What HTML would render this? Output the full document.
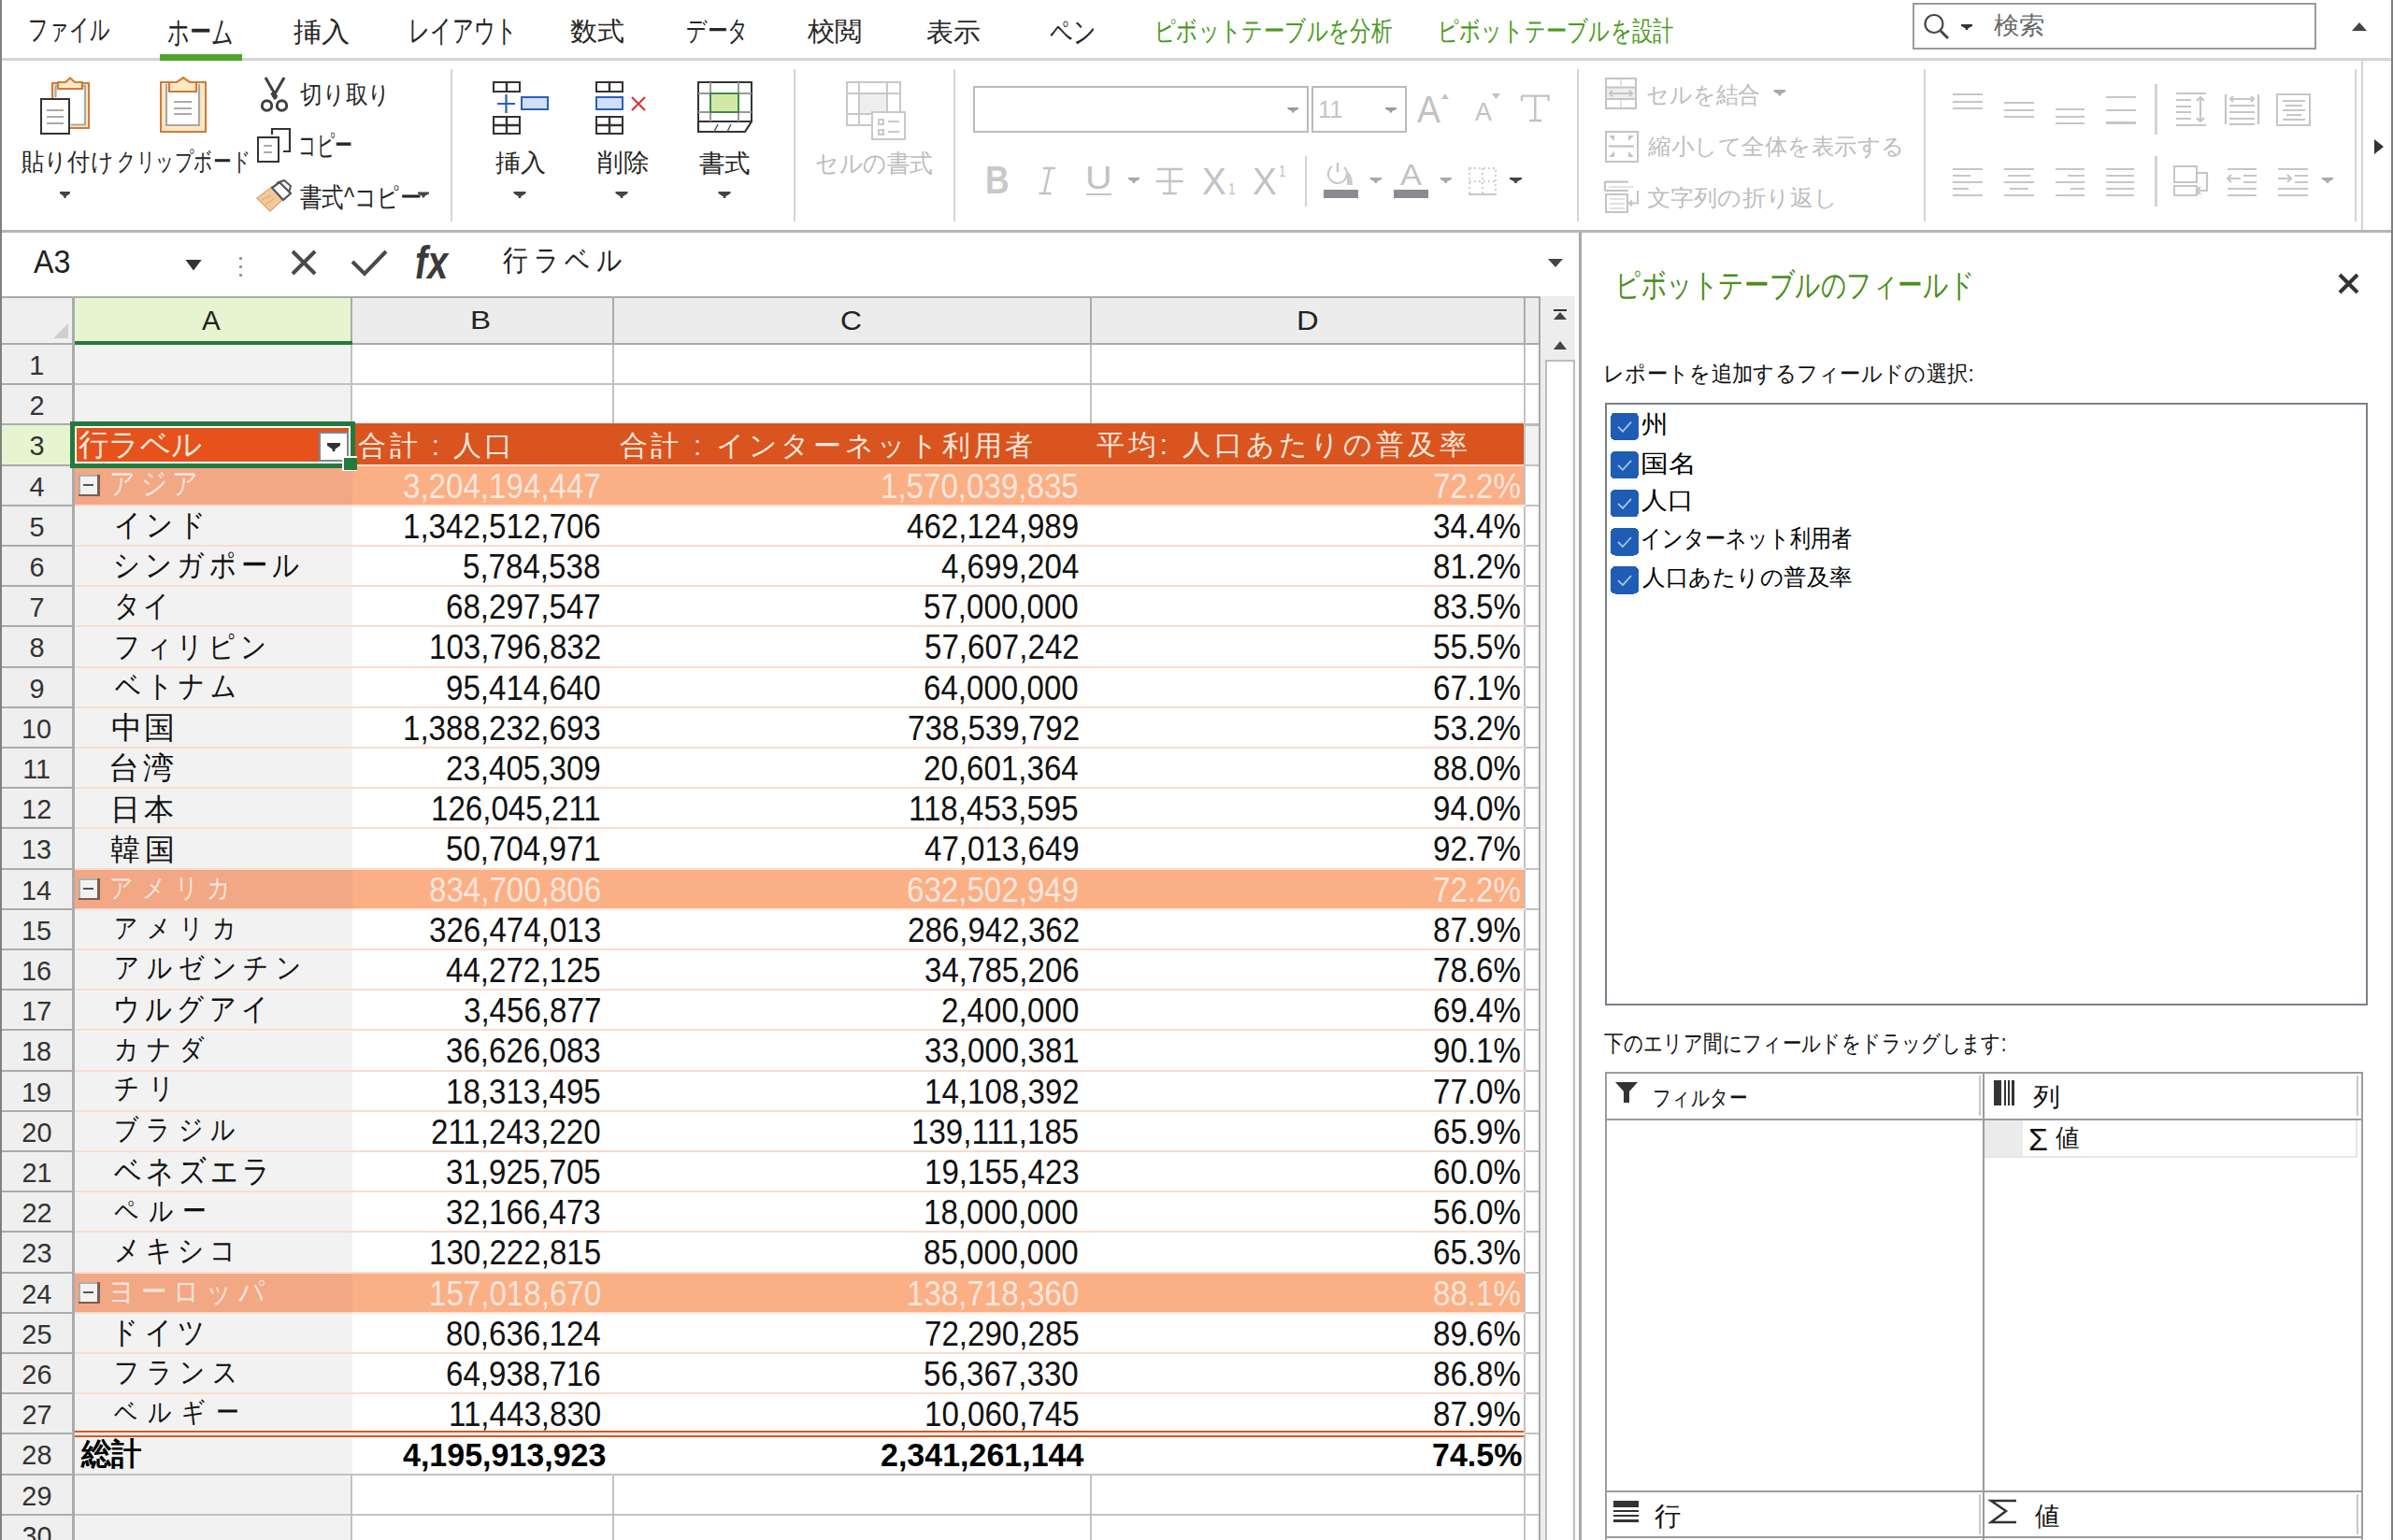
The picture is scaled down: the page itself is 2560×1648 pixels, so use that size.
<!DOCTYPE html>
<html><head><meta charset="utf-8"><style>
html,body{margin:0;padding:0;width:2560px;height:1648px;overflow:hidden;background:#fff}
svg{position:absolute;left:0;top:0} rect{shape-rendering:crispEdges}
span{position:absolute;line-height:1;white-space:pre;transform-origin:0 0;font-family:'Liberation Sans', sans-serif}
</style></head><body>
<svg width="2560" height="1648" viewBox="0 0 2560 1648">
<rect x="0" y="0" width="2560" height="1648" fill="#ffffff" /><rect x="2" y="62" width="2556" height="3" fill="#d5d5d5" /><rect x="171" y="58" width="88" height="7" fill="#4ca62a" /><rect x="2047" y="4" width="430" height="48" fill="#fff" stroke="#9a9a9a" stroke-width="2"/><circle cx="2069" cy="25.5" r="9.5" fill="none" stroke="#444" stroke-width="2.2"/><path d="M2076 33 L2084 41" stroke="#444" fill="none" stroke-width="3" /><path d="M2098.00 26.00 L2110.00 26.00 L2110.00 27.80 L2105.20 30.50 L2105.20 32.00 L2102.80 32.00 L2102.80 30.50 L2098.00 27.80 Z" fill="#333"/><path d="M2516 33 L2532 33 L2524 24 Z" stroke="none" fill="#444" stroke-width="2" /><rect x="2" y="246" width="2556" height="3" fill="#b5b5b5" /><rect x="482" y="74" width="2" height="163" fill="#d4d4d4" /><rect x="849" y="74" width="2" height="163" fill="#d4d4d4" /><rect x="1020" y="74" width="2" height="163" fill="#d4d4d4" /><rect x="1687" y="74" width="2" height="163" fill="#d4d4d4" /><rect x="2058" y="74" width="2" height="163" fill="#d4d4d4" /><rect x="2519" y="74" width="2" height="163" fill="#d4d4d4" /><rect x="2526" y="65" width="2" height="181" fill="#d4d4d4" /><path d="M2540 149 L2550 157 L2540 165 Z" stroke="none" fill="#333" stroke-width="2" /><rect x="0" y="0" width="2" height="1648" fill="#808080" /><rect x="2558" y="0" width="2" height="1648" fill="#808080" /><path d="M64.00 205.00 L75.00 205.00 L75.00 207.10 L70.60 210.25 L70.60 212.00 L68.40 212.00 L68.40 210.25 L64.00 207.10 Z" fill="#444"/><path d="M447.00 205.50 L459.00 205.50 L459.00 207.30 L454.20 210.00 L454.20 211.50 L451.80 211.50 L451.80 210.00 L447.00 207.30 Z" fill="#444"/><g><rect x="56" y="89" width="39" height="48" fill="#fde9c4" stroke="#d07a38" stroke-width="2.2"/><path d="M59.5 104 L59.5 92 L91 92 L91 133.5 L76 133.5" fill="#fff" stroke="#a8a8a8" stroke-width="2.2"/><path d="M62 88 L70 88 L75 83.5 L80 88 L88 88 L88 95 L62 95 Z" fill="#fde9c4" stroke="#d07a38" stroke-width="2.2"/><rect x="44" y="106" width="30" height="37" fill="#fff" stroke="#333" stroke-width="2.2"/><path d="M50 118 L68 118 M50 125 L68 125 M50 132 L68 132" stroke="#aaa" stroke-width="2"/></g><g><rect x="172" y="88" width="48" height="53" fill="#fde9c4" stroke="#d07a38" stroke-width="2.2"/><path d="M178 90 L178 134 L213 134 L213 90" fill="#fff" stroke="#a8a8a8" stroke-width="2.2"/><path d="M181 88 L189 88 L196 83 L203 88 L210 88 L210 98 L181 98 Z" fill="#fde9c4" stroke="#d07a38" stroke-width="2.2"/><path d="M186 109 L205 109 M186 116 L205 116 M186 122 L205 122" stroke="#aaa" stroke-width="2"/></g><g fill="none" stroke="#404040" stroke-width="3"><path d="M284 83 L296 104 M304 83 L292 104"/><path d="M291 99 L295 106" stroke-width="4"/><circle cx="285.5" cy="113" r="5.2"/><circle cx="301.5" cy="113" r="5.2"/></g><g fill="none" stroke="#333" stroke-width="2.2"><path d="M291 144 L291 138 L310 138 L310 162 L303 162"/><rect x="276" y="147" width="22" height="26" fill="#fff"/><path d="M282 156 L291 156 M282 163 L291 163" stroke="#aaa" stroke-width="2"/></g><g><path d="M275 212 L291 200 L302 214 L289 226 Z" fill="#f4c99a" stroke="#e0a878" stroke-width="1.5"/><path d="M280 214 L290 209 M284 219 L294 212" stroke="#e6b080" stroke-width="1.5"/><path d="M291 201 L299 195 L311 207 L303 214 Z" fill="#fff" stroke="#555" stroke-width="2.2"/><path d="M296 196 L304 193 L311 199 L309 206" fill="none" stroke="#555" stroke-width="2"/></g><path d="M549.50 205.00 L562.50 205.00 L562.50 207.10 L557.30 210.25 L557.30 212.00 L554.70 212.00 L554.70 210.25 L549.50 207.10 Z" fill="#444"/><path d="M658.50 205.00 L671.50 205.00 L671.50 207.10 L666.30 210.25 L666.30 212.00 L663.70 212.00 L663.70 210.25 L658.50 207.10 Z" fill="#444"/><path d="M768.50 205.00 L781.50 205.00 L781.50 207.10 L776.30 210.25 L776.30 212.00 L773.70 212.00 L773.70 210.25 L768.50 207.10 Z" fill="#444"/><g fill="none" stroke="#333" stroke-width="2.4"><rect x="528" y="88" width="28" height="10"/><path d="M542 88 L542 98"/><rect x="528" y="125" width="28" height="18"/><path d="M542 125 L542 143 M528 134 L556 134"/></g><path d="M532 111 L551 111 M541.5 101 L541.5 121" stroke="#2b5fb8" stroke-width="2.2"/><rect x="558" y="104" width="28" height="13" fill="#cfe0f8" stroke="#2b5fb8" stroke-width="2.2"/><g fill="none" stroke="#333" stroke-width="2.4"><rect x="638" y="88" width="28" height="10"/><path d="M652 88 L652 98"/><rect x="638" y="125" width="28" height="18"/><path d="M652 125 L652 143 M638 134 L666 134"/></g><rect x="638" y="104" width="28" height="13" fill="#cfe0f8" stroke="#2b5fb8" stroke-width="2.2"/><path d="M676 104 L690 118 M690 104 L676 118" stroke="#d9363e" stroke-width="2.2"/><g fill="none"><rect x="747" y="88" width="57" height="42" fill="#fff" stroke="#333" stroke-width="2.4"/><path d="M747 100 L804 100 M747 120 L804 120 M760 88 L760 130 M790 88 L790 130" stroke="#999" stroke-width="2"/><rect x="760" y="100" width="30" height="20" fill="#d3e8a3" stroke="#3f8a50" stroke-width="2.2"/><path d="M747 130 L747 141 L797 141 L804 130" stroke="#333" stroke-width="2.2"/><path d="M764 141 L768 133 M778 141 L782 133" stroke="#555" stroke-width="1.5"/></g><g fill="none" stroke="#c8c8c8" stroke-width="2"><rect x="906" y="88" width="57" height="46"/><path d="M906 100 L963 100 M906 122 L963 122 M919 88 L919 134 M949 88 L949 134"/><rect x="920" y="101" width="28" height="20" fill="#eeeeee" stroke="none"/><rect x="933" y="120" width="35" height="29" fill="#fff"/><path d="M940 128 L945 128 L945 133 L940 133 Z M940 139 L945 139 L945 144 L940 144 Z M950 130 L962 130 M950 141 L962 141"/></g><rect x="1042" y="93" width="357" height="48" fill="#fff" stroke="#bababa" stroke-width="2"/><rect x="1404" y="93" width="100" height="48" fill="#fff" stroke="#bababa" stroke-width="2"/><path d="M1377.50 115.00 L1389.00 115.00 L1389.00 116.65 L1384.40 119.12 L1384.40 120.50 L1382.10 120.50 L1382.10 119.12 L1377.50 116.65 Z" fill="#9a9a9a"/><path d="M1482.00 115.00 L1494.00 115.00 L1494.00 116.65 L1489.20 119.12 L1489.20 120.50 L1486.80 120.50 L1486.80 119.12 L1482.00 116.65 Z" fill="#9a9a9a"/><path d="M1542 106 L1550 106 L1546 100 Z" stroke="none" fill="#c2c2c2" stroke-width="2" /><path d="M1596 100 L1605 100 L1600.5 106 Z" stroke="none" fill="#c2c2c2" stroke-width="2" /><path d="M1628 102.6 L1656.6 102.6 L1656.6 108 M1628 102.6 L1628 108 M1642.3 102.6 L1642.3 129 M1636 129 L1649 129" fill="none" stroke="#c2c2c2" stroke-width="2.4"/><path d="M1116 180 L1129 180 M1111.5 207 L1124.5 207 M1123 180 L1117 207" fill="none" stroke="#c2c2c2" stroke-width="2.4"/><rect x="1162" y="207" width="27" height="2" fill="#c2c2c2" /><path d="M1207.00 190.00 L1219.00 190.00 L1219.00 191.80 L1214.20 194.50 L1214.20 196.00 L1211.80 196.00 L1211.80 194.50 L1207.00 191.80 Z" fill="#a8a8a8"/><g stroke="#c4c4c4" stroke-width="2.4" fill="none"><path d="M1238 181 L1265 181 M1251.5 181 L1251.5 207 M1244 207 L1259 207 M1236.8 194 L1265.8 194"/></g><rect x="1396" y="167" width="2" height="54" fill="#d4d4d4" /><g fill="none" stroke="#c8c8c8" stroke-width="2"><path d="M1425 178 A10 10 0 1 0 1438 179"/><path d="M1431 174 L1431 184" stroke-width="2.4"/></g><path d="M1439 181 Q1447 186 1447 198 L1441 198 L1441 184 Z" fill="#cacaca"/><rect x="1416" y="203" width="37" height="9" fill="#888b8f" /><path d="M1465.60 190.00 L1478.00 190.00 L1478.00 191.80 L1473.04 194.50 L1473.04 196.00 L1470.56 196.00 L1470.56 194.50 L1465.60 191.80 Z" fill="#a8a8a8"/><rect x="1491" y="203" width="37" height="9" fill="#888b8f" /><path d="M1540.60 190.00 L1552.80 190.00 L1552.80 191.80 L1547.92 194.50 L1547.92 196.00 L1545.48 196.00 L1545.48 194.50 L1540.60 191.80 Z" fill="#a8a8a8"/><g stroke="#d0d0d0" stroke-width="2" stroke-dasharray="2 3" fill="none"><rect x="1572" y="180" width="28" height="28"/><path d="M1586 180 L1586 208 M1572 194 L1600 194"/></g><rect x="1571" y="207" width="30" height="2" fill="#c8c8c8" /><path d="M1615.00 190.00 L1628.00 190.00 L1628.00 191.80 L1622.80 194.50 L1622.80 196.00 L1620.20 196.00 L1620.20 194.50 L1615.00 191.80 Z" fill="#444"/><g fill="none" stroke="#c4c4c4" stroke-width="2.2"><rect x="1718" y="94" width="32" height="12" fill="#eeeeee" stroke="none"/><rect x="1718" y="84.2" width="32" height="31.5"/><path d="M1718 93.5 L1750 93.5 M1718 106 L1750 106"/><path d="M1734 85 L1734 93 M1734 107 L1734 115" stroke="#e2e2e2" stroke-width="2"/><path d="M1722 100 L1746 100 M1725 97 L1722 100 L1725 103 M1743 97 L1746 100 L1743 103" stroke-width="2"/><rect x="1718" y="141" width="34" height="32"/><path d="M1721 156.5 L1748 156.5"/></g><g fill="#c4c4c4"><path d="M1721 145 L1727 151 L1727 145 Z M1748 145 L1742 151 L1742 145 Z M1721 168 L1727 162 L1727 168 Z M1748 168 L1742 162 L1742 168 Z"/></g><g fill="none" stroke="#c4c4c4" stroke-width="2.2"><path d="M1717 194.7 L1742 194.7 M1717 204 L1742 204 M1717 194 L1717 204"/><path d="M1721 200 L1748 200" stroke="#e4e4e4"/><rect x="1718" y="208" width="23" height="19"/><path d="M1722 213 L1738 213 M1722 218 L1738 218 M1722 223 L1738 223" stroke="#e0e0e0" stroke-width="2"/><path d="M1752 204 L1752 217.5 L1743 217.5 M1746 214.5 L1743 217.5 L1746 220.5" stroke-width="2"/></g><path d="M1897.60 96.00 L1910.00 96.00 L1910.00 97.98 L1905.04 100.95 L1905.04 102.60 L1902.56 102.60 L1902.56 100.95 L1897.60 97.98 Z" fill="#a8a8a8"/><rect x="2089" y="99.9" width="32" height="2.1999999999999886" fill="#c6c6c6" /><rect x="2089" y="107.9" width="32" height="2.1999999999999886" fill="#c6c6c6" /><rect x="2089" y="114.9" width="32" height="2.1999999999999886" fill="#c6c6c6" /><rect x="2144" y="108.9" width="32" height="2.1999999999999886" fill="#c6c6c6" /><rect x="2144" y="116.9" width="32" height="2.1999999999999886" fill="#c6c6c6" /><rect x="2144" y="123.9" width="32" height="2.1999999999999886" fill="#c6c6c6" /><rect x="2199" y="115.9" width="31" height="2.1999999999999886" fill="#c6c6c6" /><rect x="2199" y="123.9" width="31" height="2.1999999999999886" fill="#c6c6c6" /><rect x="2199" y="130.9" width="31" height="2.1999999999999886" fill="#c6c6c6" /><rect x="2253" y="102.9" width="32" height="2.1999999999999886" fill="#c6c6c6" /><rect x="2253" y="116.9" width="32" height="2.1999999999999886" fill="#c6c6c6" /><rect x="2253" y="130.4" width="32" height="2.1999999999999886" fill="#c6c6c6" /><rect x="2305" y="90" width="3" height="54" fill="#d4d4d4" /><rect x="2089" y="179.9" width="32" height="2.1999999999999886" fill="#c6c6c6" /><rect x="2089" y="186.9" width="19" height="2.1999999999999886" fill="#c6c6c6" /><rect x="2089" y="193.9" width="32" height="2.1999999999999886" fill="#c6c6c6" /><rect x="2089" y="200.9" width="17" height="2.1999999999999886" fill="#c6c6c6" /><rect x="2089" y="207.9" width="32" height="2.1999999999999886" fill="#c6c6c6" /><rect x="2144" y="179.9" width="32" height="2.1999999999999886" fill="#c6c6c6" /><rect x="2148" y="186.9" width="24" height="2.1999999999999886" fill="#c6c6c6" /><rect x="2144" y="193.9" width="32" height="2.1999999999999886" fill="#c6c6c6" /><rect x="2150" y="200.9" width="20" height="2.1999999999999886" fill="#c6c6c6" /><rect x="2144" y="207.9" width="32" height="2.1999999999999886" fill="#c6c6c6" /><rect x="2199" y="179.9" width="31" height="2.1999999999999886" fill="#c6c6c6" /><rect x="2212" y="186.9" width="18" height="2.1999999999999886" fill="#c6c6c6" /><rect x="2199" y="193.9" width="31" height="2.1999999999999886" fill="#c6c6c6" /><rect x="2215" y="200.9" width="15" height="2.1999999999999886" fill="#c6c6c6" /><rect x="2199" y="207.9" width="31" height="2.1999999999999886" fill="#c6c6c6" /><rect x="2253" y="179.9" width="30" height="2.1999999999999886" fill="#c6c6c6" /><rect x="2253" y="186.9" width="30" height="2.1999999999999886" fill="#c6c6c6" /><rect x="2253" y="193.9" width="30" height="2.1999999999999886" fill="#c6c6c6" /><rect x="2253" y="200.9" width="30" height="2.1999999999999886" fill="#c6c6c6" /><rect x="2253" y="207.9" width="30" height="2.1999999999999886" fill="#c6c6c6" /><rect x="2305" y="167" width="3" height="54" fill="#d4d4d4" /><g fill="none" stroke="#c6c6c6" stroke-width="2.2"><path d="M2328 100 L2360 100 M2328 107 L2344 107 M2328 114 L2344 114 M2328 120 L2344 120 M2328 127 L2344 127 M2328 134 L2360 134 M2354 104 L2354 130 M2350 108 L2354 104 L2358 108 M2350 126 L2354 130 L2358 126"/><path d="M2381 101 L2381 133 M2416 101 L2416 133 M2385 113 L2412 113 M2385 120 L2412 120 M2385 127 L2412 127 M2385 133 L2412 133 M2386 106 L2411 106 M2389 103 L2386 106 L2389 109 M2408 103 L2411 106 L2408 109"/><rect x="2436" y="101" width="35" height="33"/><path d="M2442 108 L2466 108 M2445 113 L2463 113 M2442 118 L2466 118 M2446 123 L2462 123 M2442 128 L2466 128"/><rect x="2326" y="178" width="24" height="17"/><rect x="2326" y="199" width="24" height="10"/><path d="M2350 185 L2361 185 L2361 204 L2350 204 M2354 200 L2350 204 L2354 208"/><path d="M2383 181 L2414 181 M2400 188 L2414 188 M2400 195 L2414 195 M2383 202 L2414 202 M2383 209 L2414 209 M2383 191 L2397 191 M2387 187 L2383 191 L2387 195"/><path d="M2437 181 L2469 181 M2455 188 L2469 188 M2455 195 L2469 195 M2437 202 L2469 202 M2437 209 L2469 209 M2437 191 L2451 191 M2447 187 L2451 191 L2447 195"/></g><path d="M2484.00 190.00 L2496.00 190.00 L2496.00 191.80 L2491.20 194.50 L2491.20 196.00 L2488.80 196.00 L2488.80 194.50 L2484.00 191.80 Z" fill="#aaaaaa"/><rect x="2" y="317" width="1646" height="2" fill="#ababab" /><path d="M198.5 278 L215.6 278 L207 289.6 Z" stroke="none" fill="#333" stroke-width="2" /><rect x="256" y="275" width="3" height="3" fill="#9a9a9a" /><rect x="256" y="284" width="3" height="3" fill="#9a9a9a" /><rect x="256" y="293" width="3" height="3" fill="#9a9a9a" /><path d="M313 269 L337 293 M337 269 L313 293" stroke="#4a4a4a" fill="none" stroke-width="4" /><path d="M377 280 L390 293 L413 269" stroke="#4a4a4a" fill="none" stroke-width="4" stroke-linejoin="miter"/><path d="M1656 277 L1672 277 L1664 286 Z" stroke="none" fill="#444" stroke-width="2" /><rect x="2" y="319" width="75" height="48" fill="#efefef" /><path d="M57 362 L73 362 L73 346 Z" stroke="none" fill="#cfcfcf" stroke-width="2" /><rect x="80" y="319" width="295" height="48" fill="#e6f5cf" /><rect x="377" y="319" width="278" height="48" fill="#ececec" /><rect x="657" y="319" width="509" height="48" fill="#ececec" /><rect x="1168" y="319" width="462" height="48" fill="#ececec" /><rect x="1632" y="319" width="14" height="48" fill="#ececec" /><rect x="375" y="319" width="2" height="48" fill="#ababab" /><rect x="655" y="319" width="2" height="48" fill="#ababab" /><rect x="1166" y="319" width="2" height="48" fill="#ababab" /><rect x="1630" y="319" width="2" height="48" fill="#ababab" /><rect x="1646" y="319" width="2" height="48" fill="#ababab" /><rect x="2" y="367" width="1646" height="2" fill="#ababab" /><rect x="80" y="365" width="297" height="4" fill="#27793d" /><rect x="77" y="319" width="3" height="1329" fill="#ababab" /><rect x="1646" y="319" width="2" height="1329" fill="#a8a8a8" /><rect x="2" y="369" width="75" height="41" fill="#efefef" /><rect x="2" y="410" width="75" height="2" fill="#ababab" /><rect x="80" y="369" width="295" height="41" fill="#f2f2f2" /><rect x="80" y="410" width="1566" height="2" fill="#c2c2c2" /><rect x="2" y="412" width="75" height="41" fill="#efefef" /><rect x="2" y="453" width="75" height="2" fill="#ababab" /><rect x="80" y="412" width="295" height="41" fill="#f2f2f2" /><rect x="80" y="453" width="1566" height="2" fill="#c2c2c2" /><rect x="2" y="455" width="75" height="42" fill="#e6f5cf" /><rect x="2" y="497" width="75" height="2" fill="#ababab" /><rect x="80" y="455" width="295" height="42" fill="#f2f2f2" /><rect x="80" y="497" width="1566" height="2" fill="#c2c2c2" /><rect x="2" y="499" width="75" height="41" fill="#efefef" /><rect x="2" y="540" width="75" height="2" fill="#ababab" /><rect x="80" y="499" width="295" height="41" fill="#f2f2f2" /><rect x="80" y="540" width="1566" height="2" fill="#c2c2c2" /><rect x="2" y="542" width="75" height="41" fill="#efefef" /><rect x="2" y="583" width="75" height="2" fill="#ababab" /><rect x="80" y="542" width="295" height="41" fill="#f2f2f2" /><rect x="80" y="583" width="1566" height="2" fill="#c2c2c2" /><rect x="2" y="585" width="75" height="41" fill="#efefef" /><rect x="2" y="626" width="75" height="2" fill="#ababab" /><rect x="80" y="585" width="295" height="41" fill="#f2f2f2" /><rect x="80" y="626" width="1566" height="2" fill="#c2c2c2" /><rect x="2" y="628" width="75" height="41" fill="#efefef" /><rect x="2" y="669" width="75" height="2" fill="#ababab" /><rect x="80" y="628" width="295" height="41" fill="#f2f2f2" /><rect x="80" y="669" width="1566" height="2" fill="#c2c2c2" /><rect x="2" y="671" width="75" height="42" fill="#efefef" /><rect x="2" y="713" width="75" height="2" fill="#ababab" /><rect x="80" y="671" width="295" height="42" fill="#f2f2f2" /><rect x="80" y="713" width="1566" height="2" fill="#c2c2c2" /><rect x="2" y="715" width="75" height="41" fill="#efefef" /><rect x="2" y="756" width="75" height="2" fill="#ababab" /><rect x="80" y="715" width="295" height="41" fill="#f2f2f2" /><rect x="80" y="756" width="1566" height="2" fill="#c2c2c2" /><rect x="2" y="758" width="75" height="41" fill="#efefef" /><rect x="2" y="799" width="75" height="2" fill="#ababab" /><rect x="80" y="758" width="295" height="41" fill="#f2f2f2" /><rect x="80" y="799" width="1566" height="2" fill="#c2c2c2" /><rect x="2" y="801" width="75" height="41" fill="#efefef" /><rect x="2" y="842" width="75" height="2" fill="#ababab" /><rect x="80" y="801" width="295" height="41" fill="#f2f2f2" /><rect x="80" y="842" width="1566" height="2" fill="#c2c2c2" /><rect x="2" y="844" width="75" height="41" fill="#efefef" /><rect x="2" y="885" width="75" height="2" fill="#ababab" /><rect x="80" y="844" width="295" height="41" fill="#f2f2f2" /><rect x="80" y="885" width="1566" height="2" fill="#c2c2c2" /><rect x="2" y="887" width="75" height="42" fill="#efefef" /><rect x="2" y="929" width="75" height="2" fill="#ababab" /><rect x="80" y="887" width="295" height="42" fill="#f2f2f2" /><rect x="80" y="929" width="1566" height="2" fill="#c2c2c2" /><rect x="2" y="931" width="75" height="41" fill="#efefef" /><rect x="2" y="972" width="75" height="2" fill="#ababab" /><rect x="80" y="931" width="295" height="41" fill="#f2f2f2" /><rect x="80" y="972" width="1566" height="2" fill="#c2c2c2" /><rect x="2" y="974" width="75" height="41" fill="#efefef" /><rect x="2" y="1015" width="75" height="2" fill="#ababab" /><rect x="80" y="974" width="295" height="41" fill="#f2f2f2" /><rect x="80" y="1015" width="1566" height="2" fill="#c2c2c2" /><rect x="2" y="1017" width="75" height="41" fill="#efefef" /><rect x="2" y="1058" width="75" height="2" fill="#ababab" /><rect x="80" y="1017" width="295" height="41" fill="#f2f2f2" /><rect x="80" y="1058" width="1566" height="2" fill="#c2c2c2" /><rect x="2" y="1060" width="75" height="41" fill="#efefef" /><rect x="2" y="1101" width="75" height="2" fill="#ababab" /><rect x="80" y="1060" width="295" height="41" fill="#f2f2f2" /><rect x="80" y="1101" width="1566" height="2" fill="#c2c2c2" /><rect x="2" y="1103" width="75" height="42" fill="#efefef" /><rect x="2" y="1145" width="75" height="2" fill="#ababab" /><rect x="80" y="1103" width="295" height="42" fill="#f2f2f2" /><rect x="80" y="1145" width="1566" height="2" fill="#c2c2c2" /><rect x="2" y="1147" width="75" height="41" fill="#efefef" /><rect x="2" y="1188" width="75" height="2" fill="#ababab" /><rect x="80" y="1147" width="295" height="41" fill="#f2f2f2" /><rect x="80" y="1188" width="1566" height="2" fill="#c2c2c2" /><rect x="2" y="1190" width="75" height="41" fill="#efefef" /><rect x="2" y="1231" width="75" height="2" fill="#ababab" /><rect x="80" y="1190" width="295" height="41" fill="#f2f2f2" /><rect x="80" y="1231" width="1566" height="2" fill="#c2c2c2" /><rect x="2" y="1233" width="75" height="41" fill="#efefef" /><rect x="2" y="1274" width="75" height="2" fill="#ababab" /><rect x="80" y="1233" width="295" height="41" fill="#f2f2f2" /><rect x="80" y="1274" width="1566" height="2" fill="#c2c2c2" /><rect x="2" y="1276" width="75" height="41" fill="#efefef" /><rect x="2" y="1317" width="75" height="2" fill="#ababab" /><rect x="80" y="1276" width="295" height="41" fill="#f2f2f2" /><rect x="80" y="1317" width="1566" height="2" fill="#c2c2c2" /><rect x="2" y="1319" width="75" height="42" fill="#efefef" /><rect x="2" y="1361" width="75" height="2" fill="#ababab" /><rect x="80" y="1319" width="295" height="42" fill="#f2f2f2" /><rect x="80" y="1361" width="1566" height="2" fill="#c2c2c2" /><rect x="2" y="1363" width="75" height="41" fill="#efefef" /><rect x="2" y="1404" width="75" height="2" fill="#ababab" /><rect x="80" y="1363" width="295" height="41" fill="#f2f2f2" /><rect x="80" y="1404" width="1566" height="2" fill="#c2c2c2" /><rect x="2" y="1406" width="75" height="41" fill="#efefef" /><rect x="2" y="1447" width="75" height="2" fill="#ababab" /><rect x="80" y="1406" width="295" height="41" fill="#f2f2f2" /><rect x="80" y="1447" width="1566" height="2" fill="#c2c2c2" /><rect x="2" y="1449" width="75" height="41" fill="#efefef" /><rect x="2" y="1490" width="75" height="2" fill="#ababab" /><rect x="80" y="1449" width="295" height="41" fill="#f2f2f2" /><rect x="80" y="1490" width="1566" height="2" fill="#c2c2c2" /><rect x="2" y="1492" width="75" height="41" fill="#efefef" /><rect x="2" y="1533" width="75" height="2" fill="#ababab" /><rect x="80" y="1492" width="295" height="41" fill="#f2f2f2" /><rect x="80" y="1533" width="1566" height="2" fill="#c2c2c2" /><rect x="2" y="1535" width="75" height="42" fill="#efefef" /><rect x="2" y="1577" width="75" height="2" fill="#ababab" /><rect x="80" y="1535" width="295" height="42" fill="#f2f2f2" /><rect x="80" y="1577" width="1566" height="2" fill="#c2c2c2" /><rect x="2" y="1579" width="75" height="41" fill="#efefef" /><rect x="2" y="1620" width="75" height="2" fill="#ababab" /><rect x="80" y="1579" width="295" height="41" fill="#f2f2f2" /><rect x="80" y="1620" width="1566" height="2" fill="#c2c2c2" /><rect x="2" y="1622" width="75" height="41" fill="#efefef" /><rect x="2" y="1663" width="75" height="2" fill="#ababab" /><rect x="80" y="1622" width="295" height="41" fill="#f2f2f2" /><rect x="80" y="1663" width="1566" height="2" fill="#c2c2c2" /><rect x="2" y="1665" width="75" height="41" fill="#efefef" /><rect x="2" y="1706" width="75" height="2" fill="#ababab" /><rect x="80" y="1665" width="295" height="41" fill="#f2f2f2" /><rect x="80" y="1706" width="1566" height="2" fill="#c2c2c2" /><rect x="375" y="369" width="2" height="1279" fill="#c2c2c2" /><rect x="655" y="369" width="2" height="1279" fill="#c2c2c2" /><rect x="1166" y="369" width="2" height="1279" fill="#c2c2c2" /><rect x="1630" y="369" width="2" height="1279" fill="#c2c2c2" /><rect x="80" y="453" width="1550" height="44" fill="#d9541f" /><rect x="80" y="497" width="1550" height="2" fill="#f6dccf" /><rect x="80" y="499" width="297" height="41" fill="#f2a785" /><rect x="377" y="499" width="1253" height="41" fill="#fbaf85" /><rect x="80" y="540" width="297" height="2" fill="#f3dbd1" /><rect x="377" y="540" width="1255" height="2" fill="#fde4d8" /><rect x="80" y="542" width="297" height="41" fill="#f2f2f2" /><rect x="377" y="542" width="1253" height="41" fill="#ffffff" /><rect x="80" y="583" width="1552" height="2" fill="#fbdccc" /><rect x="80" y="585" width="297" height="41" fill="#f2f2f2" /><rect x="377" y="585" width="1253" height="41" fill="#ffffff" /><rect x="80" y="626" width="1552" height="2" fill="#fbdccc" /><rect x="80" y="628" width="297" height="41" fill="#f2f2f2" /><rect x="377" y="628" width="1253" height="41" fill="#ffffff" /><rect x="80" y="669" width="1552" height="2" fill="#fbdccc" /><rect x="80" y="671" width="297" height="42" fill="#f2f2f2" /><rect x="377" y="671" width="1253" height="42" fill="#ffffff" /><rect x="80" y="713" width="1552" height="2" fill="#fbdccc" /><rect x="80" y="715" width="297" height="41" fill="#f2f2f2" /><rect x="377" y="715" width="1253" height="41" fill="#ffffff" /><rect x="80" y="756" width="1552" height="2" fill="#fbdccc" /><rect x="80" y="758" width="297" height="41" fill="#f2f2f2" /><rect x="377" y="758" width="1253" height="41" fill="#ffffff" /><rect x="80" y="799" width="1552" height="2" fill="#fbdccc" /><rect x="80" y="801" width="297" height="41" fill="#f2f2f2" /><rect x="377" y="801" width="1253" height="41" fill="#ffffff" /><rect x="80" y="842" width="1552" height="2" fill="#fbdccc" /><rect x="80" y="844" width="297" height="41" fill="#f2f2f2" /><rect x="377" y="844" width="1253" height="41" fill="#ffffff" /><rect x="80" y="885" width="1552" height="2" fill="#fbdccc" /><rect x="80" y="887" width="297" height="42" fill="#f2f2f2" /><rect x="377" y="887" width="1253" height="42" fill="#ffffff" /><rect x="80" y="929" width="1552" height="2" fill="#fbdccc" /><rect x="80" y="931" width="297" height="41" fill="#f2a785" /><rect x="377" y="931" width="1253" height="41" fill="#fbaf85" /><rect x="80" y="972" width="297" height="2" fill="#f3dbd1" /><rect x="377" y="972" width="1255" height="2" fill="#fde4d8" /><rect x="80" y="974" width="297" height="41" fill="#f2f2f2" /><rect x="377" y="974" width="1253" height="41" fill="#ffffff" /><rect x="80" y="1015" width="1552" height="2" fill="#fbdccc" /><rect x="80" y="1017" width="297" height="41" fill="#f2f2f2" /><rect x="377" y="1017" width="1253" height="41" fill="#ffffff" /><rect x="80" y="1058" width="1552" height="2" fill="#fbdccc" /><rect x="80" y="1060" width="297" height="41" fill="#f2f2f2" /><rect x="377" y="1060" width="1253" height="41" fill="#ffffff" /><rect x="80" y="1101" width="1552" height="2" fill="#fbdccc" /><rect x="80" y="1103" width="297" height="42" fill="#f2f2f2" /><rect x="377" y="1103" width="1253" height="42" fill="#ffffff" /><rect x="80" y="1145" width="1552" height="2" fill="#fbdccc" /><rect x="80" y="1147" width="297" height="41" fill="#f2f2f2" /><rect x="377" y="1147" width="1253" height="41" fill="#ffffff" /><rect x="80" y="1188" width="1552" height="2" fill="#fbdccc" /><rect x="80" y="1190" width="297" height="41" fill="#f2f2f2" /><rect x="377" y="1190" width="1253" height="41" fill="#ffffff" /><rect x="80" y="1231" width="1552" height="2" fill="#fbdccc" /><rect x="80" y="1233" width="297" height="41" fill="#f2f2f2" /><rect x="377" y="1233" width="1253" height="41" fill="#ffffff" /><rect x="80" y="1274" width="1552" height="2" fill="#fbdccc" /><rect x="80" y="1276" width="297" height="41" fill="#f2f2f2" /><rect x="377" y="1276" width="1253" height="41" fill="#ffffff" /><rect x="80" y="1317" width="1552" height="2" fill="#fbdccc" /><rect x="80" y="1319" width="297" height="42" fill="#f2f2f2" /><rect x="377" y="1319" width="1253" height="42" fill="#ffffff" /><rect x="80" y="1361" width="1552" height="2" fill="#fbdccc" /><rect x="80" y="1363" width="297" height="41" fill="#f2a785" /><rect x="377" y="1363" width="1253" height="41" fill="#fbaf85" /><rect x="80" y="1404" width="297" height="2" fill="#f3dbd1" /><rect x="377" y="1404" width="1255" height="2" fill="#fde4d8" /><rect x="80" y="1406" width="297" height="41" fill="#f2f2f2" /><rect x="377" y="1406" width="1253" height="41" fill="#ffffff" /><rect x="80" y="1447" width="1552" height="2" fill="#fbdccc" /><rect x="80" y="1449" width="297" height="41" fill="#f2f2f2" /><rect x="377" y="1449" width="1253" height="41" fill="#ffffff" /><rect x="80" y="1490" width="1552" height="2" fill="#fbdccc" /><rect x="80" y="1492" width="297" height="41" fill="#f2f2f2" /><rect x="377" y="1492" width="1253" height="41" fill="#ffffff" /><rect x="80" y="1533" width="1552" height="2" fill="#fbdccc" /><rect x="80" y="1531" width="1550" height="2" fill="#e0531d" /><rect x="80" y="1533" width="1550" height="3" fill="#ffffff" /><rect x="80" y="1536" width="1550" height="2" fill="#e0531d" /><rect x="80" y="1538" width="297" height="39" fill="#f2f2f2" /><rect x="377" y="1538" width="1253" height="39" fill="#ffffff" /><rect x="80" y="1577" width="1550" height="2" fill="#c2c2c2" /><rect x="1632" y="456" width="14" height="41" fill="#f2f2f2" /><rect x="1632" y="453" width="14" height="3" fill="#bcbcbc" /><rect x="75" y="451" width="305" height="50" fill="#237a3e" /><rect x="80" y="456" width="295" height="40" fill="#ffffff" /><rect x="82" y="458" width="291" height="36" fill="#e5521b" /><rect x="342" y="463" width="30" height="30" fill="#fff" stroke="#7d8793" stroke-width="2"/><path d="M350.00 474.00 L364.00 474.00 L364.00 476.70 L358.40 480.75 L358.40 483.00 L355.60 483.00 L355.60 480.75 L350.00 476.70 Z" fill="#333"/><rect x="366" y="488" width="16" height="16" fill="#ffffff" /><rect x="368" y="490" width="14" height="13" fill="#237a3e" /><rect x="85" y="508" width="21" height="22" fill="#f2f2f2"/><rect x="84" y="508" width="22" height="2" fill="#a9b0b6" /><rect x="84" y="508" width="2" height="22" fill="#a9b0b6" /><rect x="104" y="508" width="3" height="23" fill="#7b5e51" /><rect x="84" y="529" width="23" height="2" fill="#7b5e51" /><rect x="89" y="518" width="11" height="2" fill="#555" /><rect x="85" y="940" width="21" height="22" fill="#f2f2f2"/><rect x="84" y="940" width="22" height="2" fill="#a9b0b6" /><rect x="84" y="940" width="2" height="22" fill="#a9b0b6" /><rect x="104" y="940" width="3" height="23" fill="#7b5e51" /><rect x="84" y="961" width="23" height="2" fill="#7b5e51" /><rect x="89" y="950" width="11" height="2" fill="#555" /><rect x="85" y="1372" width="21" height="22" fill="#f2f2f2"/><rect x="84" y="1372" width="22" height="2" fill="#a9b0b6" /><rect x="84" y="1372" width="2" height="22" fill="#a9b0b6" /><rect x="104" y="1372" width="3" height="23" fill="#7b5e51" /><rect x="84" y="1393" width="23" height="2" fill="#7b5e51" /><rect x="89" y="1382" width="11" height="2" fill="#555" /><rect x="1648" y="317" width="37" height="1331" fill="#ededed" /><rect x="1654" y="386" width="30" height="1300" fill="#fff" stroke="#bcbcbc" stroke-width="2"/><rect x="1662" y="331" width="14" height="2" fill="#333" /><path d="M1662 342 L1676 342 L1669 334 Z" stroke="none" fill="#444" stroke-width="2" /><path d="M1662 374 L1676 374 L1669 365 Z" stroke="none" fill="#444" stroke-width="2" /><rect x="1685" y="249" width="4" height="1399" fill="#ffffff" /><rect x="1689" y="249" width="3" height="1399" fill="#a8a8a8" /><path d="M2503 294 L2522 313 M2522 294 L2503 313" stroke="#333" fill="none" stroke-width="4" /><rect x="1718" y="432" width="814" height="643" fill="#fff" stroke="#7b7f88" stroke-width="2"/><rect x="1723" y="441.7" width="30" height="29.5" rx="5" fill="#1f5db5"/><path d="M1731 456.7 L1736 461.7 L1745 451.7" stroke="#a9c2e8" fill="none" stroke-width="1.8" /><rect x="1723" y="482.8" width="30" height="29.5" rx="5" fill="#1f5db5"/><path d="M1731 497.8 L1736 502.8 L1745 492.8" stroke="#a9c2e8" fill="none" stroke-width="1.8" /><rect x="1723" y="523.9" width="30" height="29.5" rx="5" fill="#1f5db5"/><path d="M1731 538.9 L1736 543.9 L1745 533.9" stroke="#a9c2e8" fill="none" stroke-width="1.8" /><rect x="1723" y="565.0" width="30" height="29.5" rx="5" fill="#1f5db5"/><path d="M1731 580.0 L1736 585.0 L1745 575.0" stroke="#a9c2e8" fill="none" stroke-width="1.8" /><rect x="1723" y="606.1" width="30" height="29.5" rx="5" fill="#1f5db5"/><path d="M1731 621.1 L1736 626.1 L1745 616.1" stroke="#a9c2e8" fill="none" stroke-width="1.8" /><rect x="1718" y="1148" width="809" height="600" fill="#fff" stroke="#9c9c9c" stroke-width="2"/><rect x="2121" y="1148" width="2" height="500" fill="#9c9c9c" /><rect x="1718" y="1197" width="810" height="2" fill="#9c9c9c" /><rect x="1718" y="1595" width="810" height="2" fill="#9c9c9c" /><rect x="1718" y="1644" width="810" height="2" fill="#9c9c9c" /><rect x="2117" y="1151" width="2" height="43" fill="#c8c8c8" /><rect x="2521" y="1151" width="2" height="43" fill="#c8c8c8" /><rect x="2117" y="1599" width="2" height="43" fill="#c8c8c8" /><rect x="2521" y="1599" width="2" height="43" fill="#c8c8c8" /><path d="M1728 1158 L1752 1158 L1743 1168 L1743 1180 L1737 1180 L1737 1168 Z" stroke="none" fill="#333" stroke-width="2" /><rect x="2133" y="1156" width="8" height="27" fill="#333" /><rect x="2144" y="1156" width="2" height="27" fill="#333" /><rect x="2148" y="1156" width="2" height="27" fill="#333" /><rect x="2152" y="1156" width="3" height="27" fill="#333" /><rect x="2123" y="1199" width="41" height="39" fill="#ebebeb" /><rect x="2123" y="1237" width="399" height="2" fill="#e6e6e6" /><rect x="2520" y="1199" width="2" height="40" fill="#e6e6e6" /><rect x="1726" y="1606" width="27" height="7" fill="#333" /><rect x="1726" y="1616" width="27" height="2" fill="#333" /><rect x="1726" y="1621" width="27" height="2" fill="#333" /><rect x="1726" y="1626" width="27" height="3" fill="#333" /><path d="M2157 1606 L2130 1606 L2146 1617 L2130 1629 L2157 1629" stroke="#333" fill="none" stroke-width="2.5" />
</svg>
<span style="left:29.88px;top:15.59px;font-size:31.03px;color:#262626;transform:scaleX(0.6835);">ファイル</span><span style="left:179.30px;top:15.75px;font-size:35.00px;color:#262626;transform:scaleX(0.6654);">ホーム</span><span style="left:314.00px;top:20.31px;font-size:28.69px;color:#262626;transform:scaleX(1.0493);">挿入</span><span style="left:437.47px;top:17.01px;font-size:32.64px;color:#262626;transform:scaleX(0.6850);">レイアウト</span><span style="left:609.71px;top:20.16px;font-size:28.12px;color:#262626;transform:scaleX(1.0393);">数式</span><span style="left:733.91px;top:18.00px;font-size:30.00px;color:#262626;transform:scaleX(0.7262);">データ</span><span style="left:864.00px;top:20.16px;font-size:28.12px;color:#262626;transform:scaleX(1.0447);">校閲</span><span style="left:991.41px;top:20.15px;font-size:28.42px;color:#262626;transform:scaleX(1.0338);">表示</span><span style="left:1122.51px;top:18.13px;font-size:32.47px;color:#262626;transform:scaleX(0.7540);">ペン</span><span style="left:1234.92px;top:19.01px;font-size:29.10px;color:#4a9a22;transform:scaleX(0.7783);">ピボットテーブルを分析</span><span style="left:1537.96px;top:19.01px;font-size:29.10px;color:#4a9a22;transform:scaleX(0.7720);">ピボットテーブルを設計</span><span style="left:2133.00px;top:14.18px;font-size:26.08px;color:#6a6a6a;transform:scaleX(1.0534);">検索</span><span style="left:22.76px;top:160.54px;font-size:25.50px;color:#262626;transform:scaleX(0.9310);">貼り付け</span><span style="left:125.22px;top:160.03px;font-size:27.04px;color:#262626;transform:scaleX(0.7342);">クリップボード</span><span style="left:320.76px;top:88.93px;font-size:25.82px;color:#262626;transform:scaleX(0.9169);">切り取り</span><span style="left:319.11px;top:140.12px;font-size:31.38px;color:#262626;transform:scaleX(0.6146);">コピー</span><span style="left:320.52px;top:195.52px;font-size:29.36px;color:#262626;transform:scaleX(0.8092);">書式^コピー</span><span style="left:530.00px;top:161.54px;font-size:25.96px;color:#262626;transform:scaleX(1.0417);">挿入</span><span style="left:639.45px;top:161.00px;font-size:26.77px;color:#262626;transform:scaleX(1.0205);">削除</span><span style="left:748.44px;top:160.98px;font-size:27.34px;color:#262626;transform:scaleX(1.0181);">書式</span><span style="left:871.51px;top:161.19px;font-size:27.13px;color:#bdbdbd;transform:scaleX(0.9141);">セルの書式</span><span style="left:1410.21px;top:103.83px;font-size:26.09px;color:#c4c4c4;transform:scaleX(0.9792);">11</span><span style="left:1516.00px;top:97.39px;font-size:41.30px;color:#c2c2c2;transform:scaleX(0.9034);">A</span><span style="left:1578.00px;top:106.71px;font-size:26.81px;color:#c2c2c2;">A</span><span style="left:1053.87px;top:172.28px;font-size:42.03px;color:#c8c8c8;font-weight:bold;transform:scaleX(0.8443);">B</span><span style="left:1161.22px;top:173.29px;font-size:35.71px;color:#c2c2c2;transform:scaleX(1.1103);">U</span><span style="left:1286.23px;top:173.51px;font-size:40.58px;color:#c2c2c2;transform:scaleX(0.9539);">X</span><span style="left:1314.05px;top:195.45px;font-size:15.94px;color:#c2c2c2;transform:scaleX(0.8554);">1</span><span style="left:1340.23px;top:173.51px;font-size:40.58px;color:#c2c2c2;transform:scaleX(0.9539);">X</span><span style="left:1368.05px;top:176.45px;font-size:15.94px;color:#c2c2c2;transform:scaleX(0.8554);">1</span><span style="left:1498.00px;top:171.90px;font-size:31.88px;color:#c2c2c2;transform:scaleX(1.0767);">A</span><span style="left:1761.25px;top:89.24px;font-size:25.20px;color:#bdbdbd;transform:scaleX(0.9562);">セルを結合</span><span style="left:1762.70px;top:144.52px;font-size:23.76px;color:#bdbdbd;transform:scaleX(1.0215);">縮小して全体を表示する</span><span style="left:1761.95px;top:200.00px;font-size:23.76px;color:#bdbdbd;transform:scaleX(1.0470);">文字列の折り返し</span><span style="left:36.00px;top:261.54px;font-size:35.07px;color:#222;transform:scaleX(0.9182);">A3</span><span style="left:443.92px;top:255.62px;font-size:50.68px;color:#3a3a3a;font-weight:bold;transform:scaleX(0.7802);font-style:italic;">fx</span><span style="left:537.73px;top:263.44px;font-size:31.18px;color:#222;transform:scaleX(0.8600);letter-spacing:6.95px;">行ラベル</span><span style="left:216.00px;top:328.61px;font-size:28.70px;color:#222;transform:scaleX(1.0299);">A</span><span style="left:502.65px;top:328.82px;font-size:27.97px;color:#222;transform:scaleX(1.1851);">B</span><span style="left:899.41px;top:328.69px;font-size:28.73px;color:#222;transform:scaleX(1.1049);">C</span><span style="left:1387.39px;top:328.22px;font-size:29.86px;color:#222;transform:scaleX(1.0942);">D</span><span style="left:31.13px;top:376.67px;font-size:28.87px;color:#333;">1</span><span style="left:31.42px;top:419.67px;font-size:28.87px;color:#333;">2</span><span style="left:31.56px;top:462.67px;font-size:28.87px;color:#333;">3</span><span style="left:31.56px;top:506.67px;font-size:28.87px;color:#333;">4</span><span style="left:31.42px;top:549.67px;font-size:28.87px;color:#333;">5</span><span style="left:31.42px;top:592.67px;font-size:28.87px;color:#333;">6</span><span style="left:31.42px;top:635.67px;font-size:28.87px;color:#333;">7</span><span style="left:31.56px;top:678.67px;font-size:28.87px;color:#333;">8</span><span style="left:31.56px;top:722.67px;font-size:28.87px;color:#333;">9</span><span style="left:23.04px;top:765.67px;font-size:28.87px;color:#333;">10</span><span style="left:24.20px;top:808.67px;font-size:28.87px;color:#333;">11</span><span style="left:23.19px;top:851.67px;font-size:28.87px;color:#333;">12</span><span style="left:23.04px;top:894.67px;font-size:28.87px;color:#333;">13</span><span style="left:22.90px;top:938.67px;font-size:28.87px;color:#333;">14</span><span style="left:23.04px;top:981.67px;font-size:28.87px;color:#333;">15</span><span style="left:23.04px;top:1024.67px;font-size:28.87px;color:#333;">16</span><span style="left:23.19px;top:1067.67px;font-size:28.87px;color:#333;">17</span><span style="left:23.04px;top:1110.67px;font-size:28.87px;color:#333;">18</span><span style="left:23.04px;top:1154.67px;font-size:28.87px;color:#333;">19</span><span style="left:23.33px;top:1197.67px;font-size:28.87px;color:#333;">20</span><span style="left:23.48px;top:1240.67px;font-size:28.87px;color:#333;">21</span><span style="left:23.48px;top:1283.67px;font-size:28.87px;color:#333;">22</span><span style="left:23.33px;top:1326.67px;font-size:28.87px;color:#333;">23</span><span style="left:23.19px;top:1370.67px;font-size:28.87px;color:#333;">24</span><span style="left:23.33px;top:1413.67px;font-size:28.87px;color:#333;">25</span><span style="left:23.33px;top:1456.67px;font-size:28.87px;color:#333;">26</span><span style="left:23.48px;top:1499.67px;font-size:28.87px;color:#333;">27</span><span style="left:23.33px;top:1542.67px;font-size:28.87px;color:#333;">28</span><span style="left:23.33px;top:1586.67px;font-size:28.87px;color:#333;">29</span><span style="left:23.48px;top:1629.67px;font-size:28.87px;color:#333;">30</span><span style="left:83.67px;top:459.33px;font-size:33.33px;color:#fbe8dc;transform:scaleX(0.9826);">行ラベル</span><span style="left:383.41px;top:461.70px;font-size:29.60px;color:#fbe8dc;letter-spacing:3.38px;">合計 : 人口</span><span style="left:662.71px;top:461.70px;font-size:29.60px;color:#fbe8dc;letter-spacing:3.71px;">合計 : インターネット利用者</span><span style="left:1173.20px;top:461.30px;font-size:29.81px;color:#fbe8dc;letter-spacing:3.84px;">平均: 人口あたりの普及率</span><span style="left:121.51px;top:545.33px;font-size:33.33px;color:#111;transform:scaleX(0.8600);letter-spacing:6.04px;">インド</span><span style="left:120.68px;top:589.36px;font-size:32.95px;color:#111;transform:scaleX(0.8600);letter-spacing:5.79px;">シンガポール</span><span style="left:121.66px;top:632.37px;font-size:32.33px;color:#111;transform:scaleX(0.8600);letter-spacing:2.55px;">タイ</span><span style="left:122.23px;top:676.06px;font-size:32.26px;color:#111;transform:scaleX(0.8600);letter-spacing:6.12px;">フィリピン</span><span style="left:123.02px;top:717.73px;font-size:32.21px;color:#111;transform:scaleX(0.8600);letter-spacing:6.46px;">ベトナム</span><span style="left:118.64px;top:761.70px;font-size:33.30px;color:#111;letter-spacing:2.60px;">中国</span><span style="left:115.86px;top:806.00px;font-size:32.65px;color:#111;letter-spacing:3.81px;">台湾</span><span style="left:118.48px;top:849.84px;font-size:32.13px;color:#111;letter-spacing:3.05px;">日本</span><span style="left:117.86px;top:892.84px;font-size:32.13px;color:#111;letter-spacing:5.60px;">韓国</span><span style="left:122.01px;top:978.94px;font-size:28.95px;color:#111;transform:scaleX(0.8600);letter-spacing:10.83px;">アメリカ</span><span style="left:121.85px;top:1021.14px;font-size:30.79px;color:#111;transform:scaleX(0.8600);letter-spacing:8.18px;">アルゼンチン</span><span style="left:121.10px;top:1063.69px;font-size:32.97px;color:#111;transform:scaleX(0.8600);letter-spacing:5.73px;">ウルグアイ</span><span style="left:122.18px;top:1107.80px;font-size:30.00px;color:#111;transform:scaleX(0.8600);letter-spacing:9.93px;">カナダ</span><span style="left:122.27px;top:1150.49px;font-size:30.81px;color:#111;transform:scaleX(0.8600);letter-spacing:10.49px;">チリ</span><span style="left:122.18px;top:1194.20px;font-size:30.00px;color:#111;transform:scaleX(0.8600);letter-spacing:8.94px;">ブラジル</span><span style="left:122.31px;top:1236.65px;font-size:33.68px;color:#111;transform:scaleX(0.8600);letter-spacing:4.93px;">ベネズエラ</span><span style="left:122.09px;top:1280.52px;font-size:29.87px;color:#111;transform:scaleX(0.8600);letter-spacing:11.65px;">ペルー</span><span style="left:122.21px;top:1322.11px;font-size:32.44px;color:#111;transform:scaleX(0.8600);letter-spacing:6.67px;">メキシコ</span><span style="left:119.35px;top:1409.36px;font-size:33.10px;color:#111;transform:scaleX(0.8600);letter-spacing:7.52px;">ドイツ</span><span style="left:121.76px;top:1454.00px;font-size:30.73px;color:#111;transform:scaleX(0.8600);letter-spacing:8.88px;">フランス</span><span style="left:122.45px;top:1497.43px;font-size:28.85px;color:#111;transform:scaleX(0.8600);letter-spacing:12.15px;">ベルギー</span><span style="left:117.26px;top:502.26px;font-size:31.83px;color:#fbe3da;transform:scaleX(0.8600);letter-spacing:6.07px;">アジア</span><span style="left:117.00px;top:936.02px;font-size:29.07px;color:#fbe3da;transform:scaleX(0.8600);letter-spacing:10.45px;">アメリカ</span><span style="left:115.75px;top:1366.14px;font-size:32.14px;color:#fbe3da;transform:scaleX(0.8600);letter-spacing:7.53px;">ヨーロッパ</span><span style="left:86.64px;top:1539.70px;font-size:32.60px;color:#000;font-weight:bold;transform:scaleX(0.9843);">総計</span><span style="left:431.18px;top:502.55px;font-size:36.34px;color:#fde6dc;transform:scaleX(0.9115);">3,204,194,447</span><span style="left:942.35px;top:502.55px;font-size:36.34px;color:#fde6dc;transform:scaleX(0.9115);">1,570,039,835</span><span style="left:1532.76px;top:502.55px;font-size:36.34px;color:#fde6dc;transform:scaleX(0.9115);">72.2%</span><span style="left:431.18px;top:545.55px;font-size:36.34px;color:#111;transform:scaleX(0.9115);">1,342,512,706</span><span style="left:970.17px;top:545.55px;font-size:36.34px;color:#111;transform:scaleX(0.9115);">462,124,989</span><span style="left:1532.76px;top:545.55px;font-size:36.34px;color:#111;transform:scaleX(0.9115);">34.4%</span><span style="left:495.44px;top:588.55px;font-size:36.34px;color:#111;transform:scaleX(0.9115);">5,784,538</span><span style="left:1006.61px;top:588.55px;font-size:36.34px;color:#111;transform:scaleX(0.9115);">4,699,204</span><span style="left:1532.76px;top:588.55px;font-size:36.34px;color:#111;transform:scaleX(0.9115);">81.2%</span><span style="left:477.22px;top:631.55px;font-size:36.34px;color:#111;transform:scaleX(0.9115);">68,297,547</span><span style="left:988.39px;top:631.55px;font-size:36.34px;color:#111;transform:scaleX(0.9115);">57,000,000</span><span style="left:1532.76px;top:631.55px;font-size:36.34px;color:#111;transform:scaleX(0.9115);">83.5%</span><span style="left:459.00px;top:674.55px;font-size:36.34px;color:#111;transform:scaleX(0.9115);">103,796,832</span><span style="left:988.72px;top:674.55px;font-size:36.34px;color:#111;transform:scaleX(0.9115);">57,607,242</span><span style="left:1532.76px;top:674.55px;font-size:36.34px;color:#111;transform:scaleX(0.9115);">55.5%</span><span style="left:476.89px;top:718.55px;font-size:36.34px;color:#111;transform:scaleX(0.9115);">95,414,640</span><span style="left:988.39px;top:718.55px;font-size:36.34px;color:#111;transform:scaleX(0.9115);">64,000,000</span><span style="left:1532.76px;top:718.55px;font-size:36.34px;color:#111;transform:scaleX(0.9115);">67.1%</span><span style="left:431.18px;top:761.55px;font-size:36.34px;color:#111;transform:scaleX(0.9115);">1,388,232,693</span><span style="left:970.50px;top:761.55px;font-size:36.34px;color:#111;transform:scaleX(0.9115);">738,539,792</span><span style="left:1532.76px;top:761.55px;font-size:36.34px;color:#111;transform:scaleX(0.9115);">53.2%</span><span style="left:477.22px;top:804.55px;font-size:36.34px;color:#111;transform:scaleX(0.9115);">23,405,309</span><span style="left:988.06px;top:804.55px;font-size:36.34px;color:#111;transform:scaleX(0.9115);">20,601,364</span><span style="left:1532.76px;top:804.55px;font-size:36.34px;color:#111;transform:scaleX(0.9115);">88.0%</span><span style="left:461.32px;top:847.55px;font-size:36.34px;color:#111;transform:scaleX(0.9115);">126,045,211</span><span style="left:972.49px;top:847.55px;font-size:36.34px;color:#111;transform:scaleX(0.9115);">118,453,595</span><span style="left:1532.76px;top:847.55px;font-size:36.34px;color:#111;transform:scaleX(0.9115);">94.0%</span><span style="left:477.22px;top:890.55px;font-size:36.34px;color:#111;transform:scaleX(0.9115);">50,704,971</span><span style="left:988.72px;top:890.55px;font-size:36.34px;color:#111;transform:scaleX(0.9115);">47,013,649</span><span style="left:1532.76px;top:890.55px;font-size:36.34px;color:#111;transform:scaleX(0.9115);">92.7%</span><span style="left:458.67px;top:934.55px;font-size:36.34px;color:#fde6dc;transform:scaleX(0.9115);">834,700,806</span><span style="left:970.17px;top:934.55px;font-size:36.34px;color:#fde6dc;transform:scaleX(0.9115);">632,502,949</span><span style="left:1532.76px;top:934.55px;font-size:36.34px;color:#fde6dc;transform:scaleX(0.9115);">72.2%</span><span style="left:458.67px;top:977.55px;font-size:36.34px;color:#111;transform:scaleX(0.9115);">326,474,013</span><span style="left:970.50px;top:977.55px;font-size:36.34px;color:#111;transform:scaleX(0.9115);">286,942,362</span><span style="left:1532.76px;top:977.55px;font-size:36.34px;color:#111;transform:scaleX(0.9115);">87.9%</span><span style="left:477.22px;top:1020.55px;font-size:36.34px;color:#111;transform:scaleX(0.9115);">44,272,125</span><span style="left:988.72px;top:1020.55px;font-size:36.34px;color:#111;transform:scaleX(0.9115);">34,785,206</span><span style="left:1532.76px;top:1020.55px;font-size:36.34px;color:#111;transform:scaleX(0.9115);">78.6%</span><span style="left:495.77px;top:1063.55px;font-size:36.34px;color:#111;transform:scaleX(0.9115);">3,456,877</span><span style="left:1006.94px;top:1063.55px;font-size:36.34px;color:#111;transform:scaleX(0.9115);">2,400,000</span><span style="left:1532.76px;top:1063.55px;font-size:36.34px;color:#111;transform:scaleX(0.9115);">69.4%</span><span style="left:477.22px;top:1106.55px;font-size:36.34px;color:#111;transform:scaleX(0.9115);">36,626,083</span><span style="left:988.72px;top:1106.55px;font-size:36.34px;color:#111;transform:scaleX(0.9115);">33,000,381</span><span style="left:1532.76px;top:1106.55px;font-size:36.34px;color:#111;transform:scaleX(0.9115);">90.1%</span><span style="left:477.22px;top:1150.55px;font-size:36.34px;color:#111;transform:scaleX(0.9115);">18,313,495</span><span style="left:988.72px;top:1150.55px;font-size:36.34px;color:#111;transform:scaleX(0.9115);">14,108,392</span><span style="left:1532.76px;top:1150.55px;font-size:36.34px;color:#111;transform:scaleX(0.9115);">77.0%</span><span style="left:460.99px;top:1193.55px;font-size:36.34px;color:#111;transform:scaleX(0.9115);">211,243,220</span><span style="left:975.14px;top:1193.55px;font-size:36.34px;color:#111;transform:scaleX(0.9115);">139,111,185</span><span style="left:1532.76px;top:1193.55px;font-size:36.34px;color:#111;transform:scaleX(0.9115);">65.9%</span><span style="left:477.22px;top:1236.55px;font-size:36.34px;color:#111;transform:scaleX(0.9115);">31,925,705</span><span style="left:988.72px;top:1236.55px;font-size:36.34px;color:#111;transform:scaleX(0.9115);">19,155,423</span><span style="left:1532.76px;top:1236.55px;font-size:36.34px;color:#111;transform:scaleX(0.9115);">60.0%</span><span style="left:477.22px;top:1279.55px;font-size:36.34px;color:#111;transform:scaleX(0.9115);">32,166,473</span><span style="left:988.39px;top:1279.55px;font-size:36.34px;color:#111;transform:scaleX(0.9115);">18,000,000</span><span style="left:1532.76px;top:1279.55px;font-size:36.34px;color:#111;transform:scaleX(0.9115);">56.0%</span><span style="left:458.67px;top:1322.55px;font-size:36.34px;color:#111;transform:scaleX(0.9115);">130,222,815</span><span style="left:988.39px;top:1322.55px;font-size:36.34px;color:#111;transform:scaleX(0.9115);">85,000,000</span><span style="left:1532.76px;top:1322.55px;font-size:36.34px;color:#111;transform:scaleX(0.9115);">65.3%</span><span style="left:458.67px;top:1366.55px;font-size:36.34px;color:#fde6dc;transform:scaleX(0.9115);">157,018,670</span><span style="left:970.17px;top:1366.55px;font-size:36.34px;color:#fde6dc;transform:scaleX(0.9115);">138,718,360</span><span style="left:1532.76px;top:1366.55px;font-size:36.34px;color:#fde6dc;transform:scaleX(0.9115);">88.1%</span><span style="left:476.56px;top:1409.55px;font-size:36.34px;color:#111;transform:scaleX(0.9115);">80,636,124</span><span style="left:988.72px;top:1409.55px;font-size:36.34px;color:#111;transform:scaleX(0.9115);">72,290,285</span><span style="left:1532.76px;top:1409.55px;font-size:36.34px;color:#111;transform:scaleX(0.9115);">89.6%</span><span style="left:477.22px;top:1452.55px;font-size:36.34px;color:#111;transform:scaleX(0.9115);">64,938,716</span><span style="left:988.39px;top:1452.55px;font-size:36.34px;color:#111;transform:scaleX(0.9115);">56,367,330</span><span style="left:1532.76px;top:1452.55px;font-size:36.34px;color:#111;transform:scaleX(0.9115);">86.8%</span><span style="left:479.54px;top:1495.55px;font-size:36.34px;color:#111;transform:scaleX(0.9115);">11,443,830</span><span style="left:988.72px;top:1495.55px;font-size:36.34px;color:#111;transform:scaleX(0.9115);">10,060,745</span><span style="left:1532.76px;top:1495.55px;font-size:36.34px;color:#111;transform:scaleX(0.9115);">87.9%</span><span style="left:431.36px;top:1539.63px;font-size:35.77px;color:#000;font-weight:bold;transform:scaleX(0.9504);">4,195,913,923</span><span style="left:942.14px;top:1539.63px;font-size:35.77px;color:#000;font-weight:bold;transform:scaleX(0.9504);">2,341,261,144</span><span style="left:1532.16px;top:1539.63px;font-size:35.77px;color:#000;font-weight:bold;transform:scaleX(0.9504);">74.5%</span><span style="left:1728.17px;top:286.65px;font-size:35.05px;color:#4a8f1a;transform:scaleX(0.7657);">ピボットテーブルのフィールド</span><span style="left:1715.47px;top:388.28px;font-size:24.00px;color:#111;transform:scaleX(0.9318);">レポートを追加するフィールドの選択:</span><span style="left:1756.32px;top:441.21px;font-size:26.49px;color:#000;transform:scaleX(1.1018);">州</span><span style="left:1754.59px;top:482.55px;font-size:26.13px;color:#000;transform:scaleX(1.1525);">国名</span><span style="left:1756.45px;top:522.75px;font-size:25.85px;color:#000;transform:scaleX(1.0665);">人口</span><span style="left:1755.25px;top:564.23px;font-size:25.77px;color:#000;transform:scaleX(0.8486);">インターネット利用者</span><span style="left:1756.52px;top:606.24px;font-size:23.75px;color:#000;transform:scaleX(1.0209);">人口あたりの普及率</span><span style="left:1716.39px;top:1104.25px;font-size:25.00px;color:#111;transform:scaleX(0.8215);">下のエリア間にフィールドをドラッグします:</span><span style="left:1768.00px;top:1162.56px;font-size:24.44px;color:#111;transform:scaleX(0.8165);">フィルター</span><span style="left:2175.01px;top:1161.39px;font-size:26.88px;color:#111;transform:scaleX(1.0715);">列</span><span style="left:2169.60px;top:1202.84px;font-size:33.48px;color:#111;transform:scaleX(1.0145);">Σ</span><span style="left:2199.40px;top:1204.43px;font-size:27.42px;color:#111;transform:scaleX(0.9400);">値</span><span style="left:1769.72px;top:1608.60px;font-size:27.96px;color:#111;transform:scaleX(1.0060);">行</span><span style="left:2176.50px;top:1608.60px;font-size:27.96px;color:#111;transform:scaleX(0.9403);">値</span>
</body></html>
